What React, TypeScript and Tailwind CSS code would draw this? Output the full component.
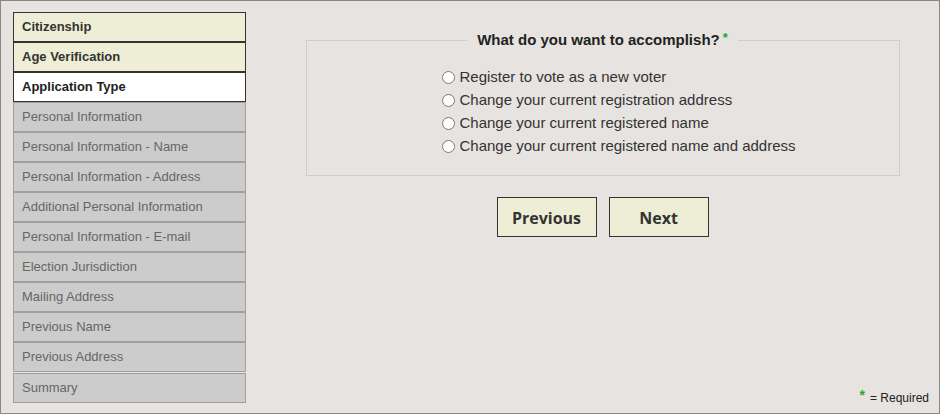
import { useState } from 'react';

type Step = { label: string; state: 'done' | 'active' | 'todo' };

const steps: Step[] = [
    { label: 'Citizenship', state: 'done' },
    { label: 'Age Verification', state: 'done' },
    { label: 'Application Type', state: 'active' },
    { label: 'Personal Information', state: 'todo' },
    { label: 'Personal Information - Name', state: 'todo' },
    { label: 'Personal Information - Address', state: 'todo' },
    { label: 'Additional Personal Information', state: 'todo' },
    { label: 'Personal Information - E-mail', state: 'todo' },
    { label: 'Election Jurisdiction', state: 'todo' },
    { label: 'Mailing Address', state: 'todo' },
    { label: 'Previous Name', state: 'todo' },
    { label: 'Previous Address', state: 'todo' },
];

const options = [
    'Register to vote as a new voter',
    'Change your current registration address',
    'Change your current registered name',
    'Change your current registered name and address',
];

const stepClass = (state: Step['state']) => {
    switch (state) {
        case 'done': return 'bg-[#eeeed6] border-[#333] text-[#333] font-bold';
        case 'active': return 'bg-white border-[#333] text-[#222] font-bold';
        default: return 'bg-[#cccccc] border-[#a0a0a0] text-[#666]';
    }
};

const App = () => {
    const [choice, setChoice] = useState<string | null>(null);

    return (
        <div className="w-[940px] h-[414px] border border-[#888] bg-[#e6e3e0] flex font-['Liberation_Sans',Arial,sans-serif]">
            {/* Steps */}
            <div className="pl-3 pt-[11px] w-[245px] shrink-0 flex flex-col">
                {steps.map((s) => (
                    <div
                        key={s.label}
                        className={`h-[30px] border px-2 flex items-center text-[13px] leading-none pb-[2px] ${stepClass(s.state)}`}
                    >
                        {s.label}
                    </div>
                ))}
                <div className={`h-[30px] mt-[1px] border px-2 flex items-center text-[13px] leading-none pb-[2px] ${stepClass('todo')}`}>
                    Summary
                </div>
            </div>

            {/* Main */}
            <div className="flex-1 flex flex-col pl-5 pt-[30px]">
                <fieldset className="w-[594px] mx-auto border border-[#cfcccc] px-0 pt-[17px] pb-[17px]">
                    <legend className="mx-auto px-[10px] text-[15px] font-bold text-[#222] leading-[18px]">
                        What do you want to accomplish?
                        <span className="relative -top-[3px] text-[#22aa22] text-[13px] leading-none ml-[3px]">*</span>
                    </legend>
                    <div className="pl-[135px] flex flex-col">
                        {options.map((o) => (
                            <label key={o} className="h-[23px] flex items-center text-[15px] text-[#333]">
                                <input
                                    type="radio"
                                    name="apptype"
                                    checked={choice === o}
                                    onChange={() => setChoice(o)}
                                    className="m-0 mr-[5px] w-[13px] h-[13px]"
                                />
                                {o}
                            </label>
                        ))}
                    </div>
                </fieldset>

                <div className="flex justify-center gap-3 mt-[21px]">
                    {['Previous', 'Next'].map((b) => (
                        <button
                            key={b}
                            className="w-[100px] h-[40px] border border-[#333] bg-[#eeeed6] text-[#333] text-[16px] font-bold pt-[2px] font-['Open_Sans',sans-serif]"
                        >
                            {b}
                        </button>
                    ))}
                </div>

                <div className="mt-auto mb-[6px] mr-[10px] self-end flex items-end text-[12px] text-[#222]">
                    <span className="text-[#22aa22] text-[14px] font-bold leading-none mr-[5px] -translate-y-[5px]">*</span>
                    = Required
                </div>
            </div>
        </div>
    );
};

export default App;
